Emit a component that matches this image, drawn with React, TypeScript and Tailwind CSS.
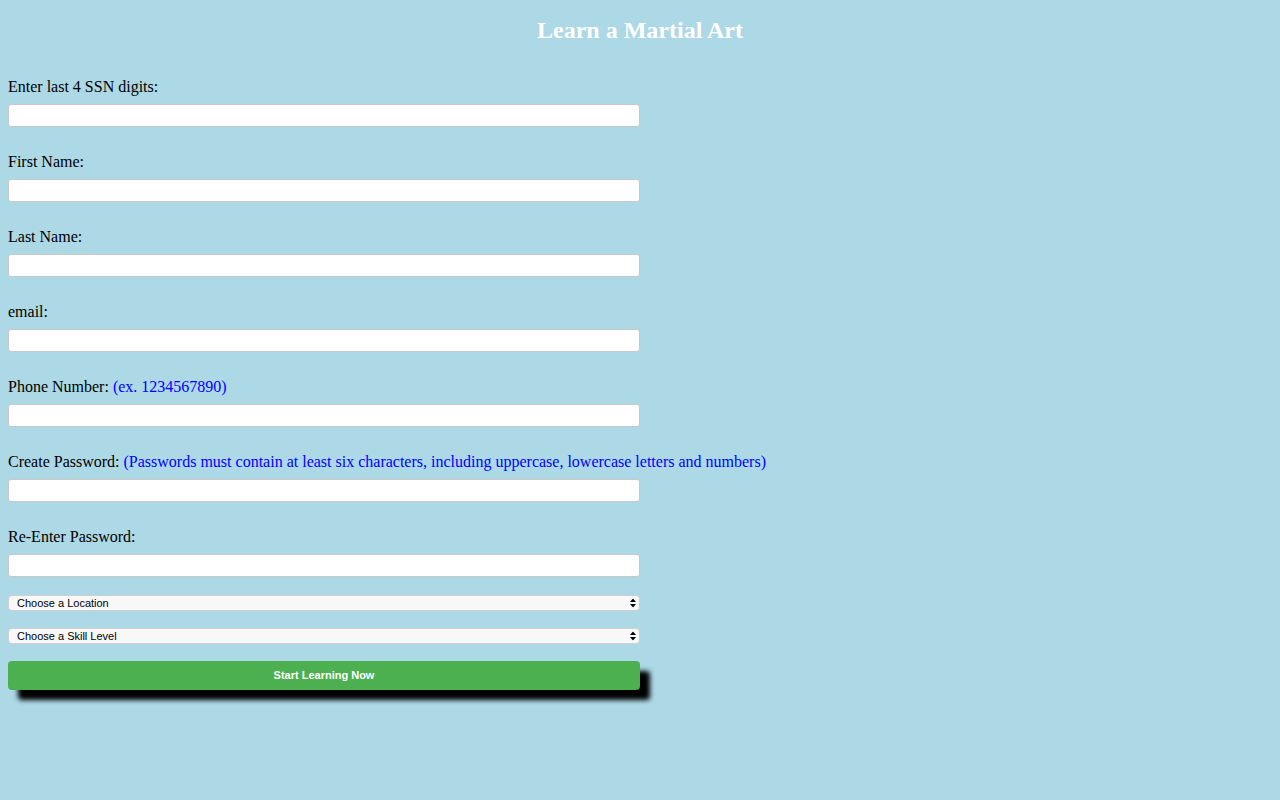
import React from "react";

interface Field {
  id: string;
  label: string;
  hint?: string;
  type: string;
}

const fields: Field[] = [
  { id: "ssn", label: "Enter last 4 SSN digits:", type: "text" },
  { id: "first", label: "First Name:", type: "text" },
  { id: "last", label: "Last Name:", type: "text" },
  { id: "email", label: "email:", type: "email" },
  { id: "phone", label: "Phone Number:", hint: "(ex. 1234567890)", type: "tel" },
  {
    id: "password",
    label: "Create Password:",
    hint: "(Passwords must contain at least six characters, including uppercase, lowercase letters and numbers)",
    type: "password"
  },
  { id: "password2", label: "Re-Enter Password:", type: "password" }
];

function Arrows() {
  return (
    <svg
      className="pointer-events-none absolute right-[4px] top-1/2 -translate-y-1/2"
      width="6"
      height="9"
      viewBox="0 0 6 9"
    >
      <path d="M3 0 L6 3.5 L0 3.5 Z" fill="#000" />
      <path d="M0 5.5 L6 5.5 L3 9 Z" fill="#000" />
    </svg>
  );
}

function Select({ placeholder }: { placeholder: string }) {
  return (
    <div className="relative w-[632px]">
      <select
        defaultValue=""
        className="block h-[16px] w-full appearance-none rounded-[4px] border border-[#cfcfcf] bg-[#f8f8f8] pl-[8px] font-['Liberation_Sans',Arial,sans-serif] text-[11px] leading-[14px] text-black outline-none"
      >
        <option value="">{placeholder}</option>
      </select>
      <Arrows />
    </div>
  );
}

export default function App() {
  return (
    <div className="min-h-screen bg-[#add8e6] px-[8px] font-['Liberation_Serif','Times_New_Roman',serif] text-black">
      <h1 className="pt-[16px] text-center text-[24px] font-bold leading-[28px] text-white">
        Learn a Martial Art
      </h1>

      <form className="mt-[34px] flex flex-col" onSubmit={(e) => e.preventDefault()}>
        {fields.map((f) => (
          <div key={f.id} className="mb-[26px] flex flex-col">
            <label htmlFor={f.id} className="text-[16px] leading-[18px]">
              {f.label}
              {f.hint && <span className="text-[#0000ff]"> {f.hint}</span>}
            </label>
            <input
              id={f.id}
              type={f.type}
              className="mt-[8px] h-[23px] w-[632px] rounded-[3px] border border-[#c8c8c8] bg-white px-[4px] text-[13px] outline-none"
            />
          </div>
        ))}

        <div className="-mt-[8px] flex flex-col gap-[17px]">
          <Select placeholder="Choose a Location" />
          <Select placeholder="Choose a Skill Level" />
          <button
            type="submit"
            className="h-[29px] w-[632px] rounded-[4px] bg-[#4caf50] font-['Liberation_Sans',Arial,sans-serif] text-[11px] font-bold text-white shadow-[10px_10px_5px_#000]"
          >
            Start Learning Now
          </button>
        </div>
      </form>
    </div>
  );
}
